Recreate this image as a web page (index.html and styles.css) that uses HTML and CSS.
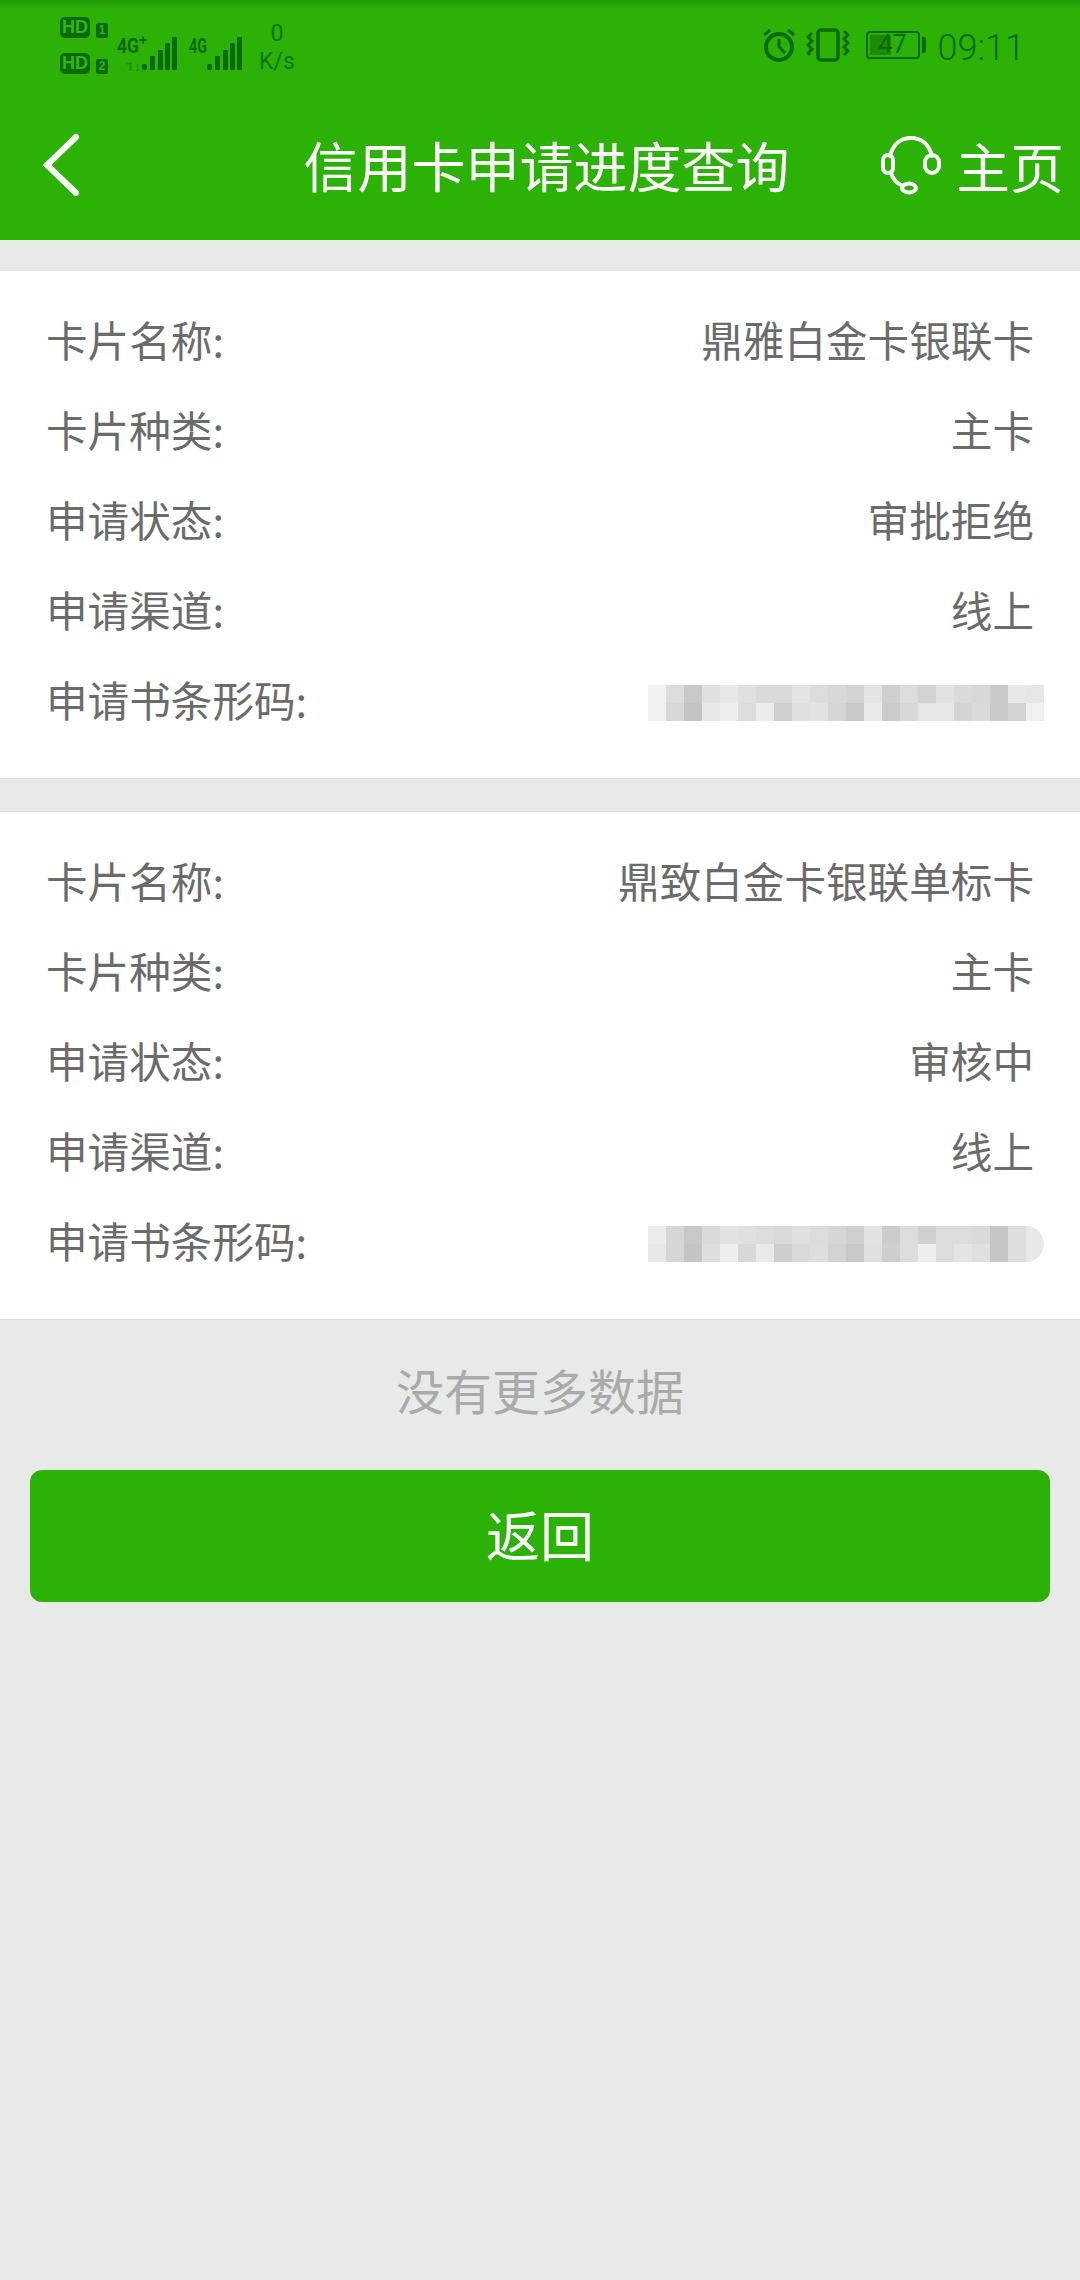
FILE: index.html
```html
<!DOCTYPE html>
<html lang="zh-CN">
<head>
    <meta charset="UTF-8">
    <meta name="viewport" content="width=device-width, initial-scale=1.0">
    <title>信用卡申请进度查询</title>
    <link rel="stylesheet" href="styles.css">
</head>
<body>

    <header class="top">
        <div class="status">
            <div class="hd-stack">
                <div class="hd-row"><span class="hd">HD</span><span class="sim">1</span></div>
                <div class="hd-row hd-row-low"><span class="hd">HD</span><span class="sim">2</span></div>
            </div>
            <svg class="signal" width="130" height="50" viewBox="0 0 130 50">
                <text x="0" y="27" class="net" textLength="22" lengthAdjust="spacingAndGlyphs">4G</text>
                <text x="22" y="19" class="net-plus">+</text>
                <text x="9" y="45" class="net-speed" textLength="15" lengthAdjust="spacingAndGlyphs">1↓</text>
                <g class="bars">
                    <rect x="25" y="38" width="5" height="6" rx="2"/>
                    <rect x="33" y="30" width="5" height="14" rx="1"/>
                    <rect x="41" y="24" width="5" height="20" rx="1"/>
                    <rect x="48" y="17" width="5" height="27" rx="1"/>
                    <rect x="55" y="11" width="5" height="33" rx="1"/>
                </g>
                <text x="72" y="27" class="net" textLength="18" lengthAdjust="spacingAndGlyphs">4G</text>
                <g class="bars">
                    <rect x="90" y="38" width="5" height="6" rx="2"/>
                    <rect x="98" y="30" width="5" height="14" rx="1"/>
                    <rect x="106" y="24" width="5" height="20" rx="1"/>
                    <rect x="113" y="17" width="5" height="27" rx="1"/>
                    <rect x="120" y="11" width="5" height="33" rx="1"/>
                </g>
            </svg>
            <div class="speed"><span>0</span><span>K/s</span></div>
            <div class="status-right">
                <svg class="alarm" width="34" height="34" viewBox="0 0 34 34" fill="none">
                    <circle cx="17" cy="19" r="13" stroke-width="4"/>
                    <path d="M17 11v8l6 6" stroke-width="3"/>
                    <path d="M2 7l6-5M32 7l-6-5" stroke-width="3"/>
                </svg>
                <svg class="vibrate" width="44" height="34" viewBox="0 0 44 34" fill="none">
                    <rect x="12" y="2" width="20" height="30" rx="3" stroke-width="3.5"/>
                    <path d="M6 5L2 9l4 4-4 4 4 4-4 4 2 2M38 3l4 4-4 4 4 4-4 4 4 4-4 4" stroke-width="3"/>
                </svg>
                <div class="battery">
                    <div class="battery-body"><span class="battery-fill"></span><span class="battery-num">47</span></div>
                    <span class="battery-nub"></span>
                </div>
                <span class="time">09:11</span>
            </div>
        </div>
        <nav class="nav">
            <a href="#" class="back">
                <svg width="40" height="66" viewBox="0 0 40 66" fill="none">
                    <path d="M35 5L6 33l29 28" stroke="#fff" stroke-width="6" stroke-linecap="round" stroke-linejoin="miter"/>
                </svg>
            </a>
            <h1 class="title">信用卡申请进度查询</h1>
            <a href="#" class="home">
                <svg width="60" height="60" viewBox="0 0 60 60" fill="none" stroke="#fff" stroke-width="4" stroke-linecap="round">
                    <path d="M9 21C12 9 20 3 30 3s18 6 21 18"/>
                    <rect x="2" y="20" width="10" height="18" rx="5"/>
                    <rect x="44" y="20" width="14" height="18" rx="7"/>
                    <path d="M10 38c2 7 7 11 12 13"/>
                    <ellipse cx="28" cy="53" rx="7" ry="4.5"/>
                </svg>
                <span>主页</span>
            </a>
        </nav>
    </header>

    <main>
        <section class="card">
            <div class="row"><span>卡片名称:</span><span>鼎雅白金卡银联卡</span></div>
            <div class="row"><span>卡片种类:</span><span>主卡</span></div>
            <div class="row"><span>申请状态:</span><span>审批拒绝</span></div>
            <div class="row"><span>申请渠道:</span><span>线上</span></div>
            <div class="row"><span>申请书条形码:</span><span class="mosaic mosaic-one"></span></div>
        </section>

        <section class="card card-next">
            <div class="row"><span>卡片名称:</span><span>鼎致白金卡银联单标卡</span></div>
            <div class="row"><span>卡片种类:</span><span>主卡</span></div>
            <div class="row"><span>申请状态:</span><span>审核中</span></div>
            <div class="row"><span>申请渠道:</span><span>线上</span></div>
            <div class="row"><span>申请书条形码:</span><span class="mosaic mosaic-two"></span></div>
        </section>

        <p class="no-more">没有更多数据</p>
        <button class="back-btn">返回</button>
    </main>

</body>
</html>
```

FILE: styles.css
```css
* {
    box-sizing: border-box;
}
html, body {
    height: 100%;
}
body {
    margin: 0;
    background-color: #e8e9e9;
    font-family: "Noto Sans CJK SC", "Noto Sans", sans-serif;
    color: #6b6b6b;
}
a {
    text-decoration: none;
    color: #fff;
}

/* green top area */
.top {
    height: 240px;
    background: linear-gradient(#1f9606, #2cb107 8px);
    color: #fff;
}
.status {
    height: 90px;
    display: flex;
    padding: 17px 0 0 60px;
    color: #0b6a05;
}
.hd-stack {
    width: 48px;
}
.hd-row {
    display: flex;
    align-items: flex-end;
    gap: 6px;
    height: 21px;
}
.hd-row-low {
    margin-top: 15px;
}
.hd {
    width: 30px;
    height: 21px;
    background-color: #0b6a05;
    border-radius: 5px;
    color: #35b512;
    font: bold 18px/21px "Liberation Sans", sans-serif;
    text-align: center;
}
.sim {
    width: 12px;
    height: 15px;
    background-color: #0b6a05;
    border-radius: 2px;
    color: #35b512;
    font: bold 12px/15px "Liberation Sans", sans-serif;
    text-align: center;
}
.signal {
    margin: 9px 0 0 9px;
    flex: none;
}
.net {
    font: bold 20px "Roboto", sans-serif;
    fill: #0b6a05;
}
.net-plus {
    font: bold 15px "Roboto", sans-serif;
    fill: #0b6a05;
}
.net-speed {
    font: bold 13px "Roboto", sans-serif;
    fill: #1f8d0a;
}
.bars {
    fill: #0b6a05;
}
.speed {
    width: 36px;
    margin: 3px 0 0 12px;
    display: flex;
    flex-direction: column;
    align-items: center;
    font: 400 23px/28px "Roboto", sans-serif;
    color: #0f7406;
}
.status-right {
    margin: 10px 55px 0 auto;
    display: flex;
    align-items: flex-start;
    height: 36px;
}
.alarm, .vibrate {
    stroke: #0b6a05;
    flex: none;
}
.alarm {
    margin-top: 1px;
}
.vibrate {
    margin: 1px 0 0 10px;
}
.battery {
    margin: 4px 0 0 16px;
    display: flex;
    align-items: center;
}
.battery-body {
    position: relative;
    width: 54px;
    height: 28px;
    border: 2px solid #0b6a05;
    border-radius: 4px;
    text-align: center;
    font: 400 25px/24px "Roboto", sans-serif;
    color: #0b6a05;
}
.battery-fill {
    position: absolute;
    left: 2px;
    top: 2px;
    width: 21px;
    bottom: 2px;
    background-color: #1c8a06;
}
.battery-num {
    position: relative;
}
.battery-nub {
    width: 4px;
    height: 16px;
    margin-left: 2px;
    background-color: #0b6a05;
    border-radius: 0 2px 2px 0;
}
.time {
    margin-left: 12px;
    font: 300 36px/42px "Roboto", sans-serif;
    color: #0b6a05;
}

/* nav row */
.nav {
    height: 150px;
    display: grid;
    grid-template-columns: 212px 1fr auto;
    align-items: center;
}
.back {
    padding-left: 41px;
    display: flex;
}
.title {
    margin: 0;
    font-size: 54px;
    font-weight: normal;
    text-align: center;
    line-height: 78px;
}
.home {
    display: flex;
    align-items: center;
    gap: 15px;
    padding-right: 16px;
    font-size: 54px;
}

/* list cards */
main {
    padding-top: 30px;
}
.card {
    height: 509px;
    padding: 23px 46px 35px 46px;
    background-color: #fff;
    border-top: 1px solid #dcdcdc;
    border-bottom: 1px solid #dcdcdc;
}
.card-next {
    margin-top: 32px;
}
.row {
    height: 90px;
    display: flex;
    justify-content: space-between;
    align-items: center;
    font-size: 41.6px;
}
.mosaic {
    width: 396px;
    height: 36px;
    margin: 8px -10px 0 0;
    background-size: 100% 18px;
    background-repeat: no-repeat;
    background-position: top, bottom;
}
.mosaic-one {
    background-image:
        linear-gradient(90deg, #f0f0f0 18px, #dcdcdc 0 36px, #c8c8c8 0 54px, #e0e0e0 0 72px, #e8e8e8 0 90px, #e0e0e0 0 108px, #dadada 0 144px, #e4e4e4 0 162px, #dcdcdc 0 180px, #d8d8d8 0 198px, #d4d4d4 0 216px, #e4e4e4 0 234px, #cfcfcf 0 252px, #dcdcdc 0 270px, #d2d2d2 0 288px, #e2e2e2 0 306px, #dadada 0 324px, #d8d8d8 0 342px, #cacaca 0 360px, #e8e8e8 0 378px, #e6e6e6 0),
        linear-gradient(90deg, #f0f0f0 18px, #d8d8d8 0 36px, #c4c4c4 0 54px, #e6e6e6 0 72px, #eeeeee 0 90px, #dcdcdc 0 108px, #ececec 0 126px, #cfcfcf 0 144px, #e0e0e0 0 162px, #e2e2e2 0 180px, #d6d6d6 0 198px, #c8c8c8 0 216px, #eaeaea 0 234px, #cbcbcb 0 252px, #d8d8d8 0 270px, #e6e6e6 0 306px, #d4d4d4 0 324px, #dadada 0 342px, #cacaca 0 360px, #d2d2d2 0 378px, #f0f0f0 0);
}
.mosaic-two {
    border-radius: 0 18px 18px 0;
    background-image:
        linear-gradient(90deg, #ececec 18px, #d6d6d6 0 36px, #c8c8c8 0 54px, #dadada 0 72px, #e2e2e2 0 90px, #e0e0e0 0 108px, #dcdcdc 0 126px, #dadada 0 144px, #e0e0e0 0 162px, #dcdcdc 0 180px, #d6d6d6 0 198px, #cfcfcf 0 216px, #e2e2e2 0 234px, #cccccc 0 252px, #dcdcdc 0 270px, #cfcfcf 0 288px, #dcdcdc 0 324px, #dadada 0 342px, #c6c6c6 0 360px, #dedede 0 378px, #e8e8e8 0),
        linear-gradient(90deg, #e8e8e8 18px, #d6d6d6 0 36px, #c4c4c4 0 54px, #dedede 0 72px, #eeeeee 0 90px, #d8d8d8 0 108px, #eaeaea 0 126px, #cecece 0 144px, #dadada 0 162px, #dedede 0 180px, #d2d2d2 0 198px, #c8c8c8 0 216px, #e0e0e0 0 234px, #cecece 0 252px, #dcdcdc 0 270px, #eeeeee 0 288px, #dcdcdc 0 306px, #e4e4e4 0 324px, #e0e0e0 0 342px, #c6c6c6 0 360px, #dedede 0 378px, #e8e8e8 0);
}

/* bottom */
.no-more {
    margin: 0;
    height: 150px;
    padding-top: 33px;
    text-align: center;
    font-size: 48px;
    line-height: 72px;
    color: #aaa;
}
.back-btn {
    display: block;
    width: 1020px;
    height: 132px;
    margin: 0 30px;
    padding-bottom: 6px;
    border: none;
    border-radius: 12px;
    background-color: #2cb107;
    color: #fff;
    font-family: inherit;
    font-size: 54px;
}
```
